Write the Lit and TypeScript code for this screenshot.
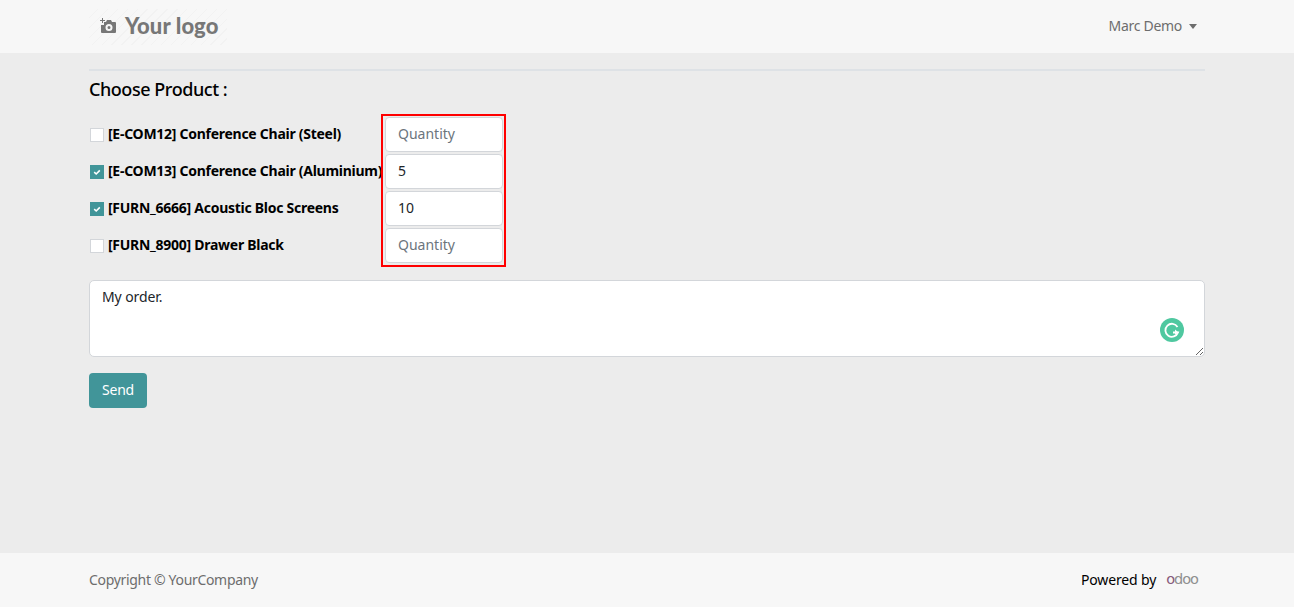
import { LitElement, html, css } from "lit";
import { customElement } from "lit/decorators.js";

const products = [
  { label: "[E-COM12] Conference Chair (Steel)", checked: false, qty: "" },
  { label: "[E-COM13] Conference Chair (Aluminium)", checked: true, qty: "5" },
  { label: "[FURN_6666] Acoustic Bloc Screens", checked: true, qty: "10" },
  { label: "[FURN_8900] Drawer Black", checked: false, qty: "" },
];

@customElement("app-root")
export class AppRoot extends LitElement {
  static styles = css`
    :host { display: block; font-family: "Noto Sans", sans-serif; font-size: 14px; color: #000; }
    * { box-sizing: border-box; }
    .page { min-height: 607px; display: flex; flex-direction: column; background: #ececec; }
    .bar { background: #f7f7f7; padding: 0 89px; display: flex; align-items: center; justify-content: space-between; flex: none; }
    .top { height: 53px; }
    .logo { width: 138px; height: 36px; display: flex; align-items: center; gap: 8px; padding: 0 0 2px 10px;
      background: repeating-linear-gradient(135deg, #f7f7f7 0 6px, #f2f2f2 6px 7px);
      color: #777; font-family: "Lato", sans-serif; font-weight: 900; font-size: 22px; letter-spacing: 0.1px; }
    .logo svg { flex: none; }
    .user { display: flex; align-items: center; gap: 7px; color: #6d6d6d; margin-right: 8px; letter-spacing: -0.3px; padding-bottom: 2px; }
    .caret { width: 0; height: 0; margin-top: 1px; border-left: 4px solid transparent; border-right: 4px solid transparent; border-top: 5px solid #6d6d6d; }
    main { flex: 1; padding: 16px 89px 0; }
    hr { margin: 0; border: 0; border-top: 2px solid #dee2e6; }
    h2 { margin: 6px 0 0; font-size: 18px; line-height: 24px; font-weight: 500; letter-spacing: -0.45px; }
    .form { display: flex; margin-top: 13px; }
    .labels { width: 292px; padding-top: 3px; display: flex; flex-direction: column; gap: 2px; }
    .row { height: 35px; display: flex; align-items: center; gap: 4px; font-weight: 700; white-space: nowrap; padding-left: 1px; letter-spacing: -0.27px; }
    .row span:last-child { padding-bottom: 2px; }
    .box { width: 14px; height: 14px; flex: none; background: #fff; border: 1px solid #d3d6da; display: flex; align-items: center; justify-content: center; }
    .box.on { background: #419599; border-color: #419599; }
    .qty { border: 2px solid #f00; padding: 1px 1px 1px 2px; width: 125px; height: 153px; display: flex; flex-direction: column; gap: 2px; }
    input { width: 118px; height: 35px; border: 1px solid #d3d6da; border-radius: 4px; padding: 0 12px 2px; font: inherit; color: #212529; background: #fff; outline: none; display: block; }
    input::placeholder { color: #6c757d; opacity: 1; }
    .note { position: relative; margin-top: 13px; height: 77px; }
    textarea { display: block; width: 100%; height: 77px; border: 1px solid #d3d6da; border-radius: 5px; padding: 6px 12px; font: inherit; letter-spacing: -0.1px; color: #212529; background: #fff; outline: none; }
    .g { position: absolute; right: 21px; top: 38px; width: 24px; height: 24px; }
    button { display: block; margin-top: 16px; width: 58px; height: 35px; border: 0; border-radius: 4px; padding: 0 0 2px; background: #419599; color: #fff; font: inherit; letter-spacing: -0.2px; }
    .foot { height: 54px; }
    .copy { color: #6d6d6d; letter-spacing: -0.32px; padding-bottom: 2px; }
    .pow { display: flex; align-items: center; gap: 10px; margin-right: 7px; letter-spacing: -0.15px; padding-bottom: 2px; }
    .odoo { font-family: "DejaVu Sans", sans-serif; font-size: 14.5px; color: #8f8f8f; letter-spacing: -1px; line-height: 1; padding-top: 1px; }
    .odoo b { font-weight: 400; color: #875a7b; }
  `;

  render() {
    return html`
      <div class="page">
        <header class="bar top">
          <div class="logo">
            <svg width="18" height="16" viewBox="0 0 18 16" fill="#777">
              <path d="M3 0h1v2h2v1H4v2H3V3H1V2h2z"/>
              <path fill-rule="evenodd" d="M8 2h4l1 2h3a1 1 0 0 1 1 1v9a1 1 0 0 1-1 1H3a1 1 0 0 1-1-1V7h3V4h2zM10 6a3.5 3.5 0 1 0 0 7 3.5 3.5 0 0 0 0-7zm0 2a1.5 1.5 0 1 1 0 3 1.5 1.5 0 0 1 0-3z"/>
            </svg>
            <span>Your logo</span>
          </div>
          <div class="user"><span>Marc Demo</span><i class="caret"></i></div>
        </header>
        <main>
          <hr />
          <h2>Choose Product :</h2>
          <div class="form">
            <div class="labels">
              ${products.map(
                (p) => html`<div class="row">
                  <span class="box ${p.checked ? "on" : ""}">
                    ${p.checked
                      ? html`<svg width="10" height="10" viewBox="0 0 10 10"><path d="M2.2 5.2 4.2 7 7.8 3.4" fill="none" stroke="#fff" stroke-width="1.6"/></svg>`
                      : ""}
                  </span>
                  <span>${p.label}</span>
                </div>`
              )}
            </div>
            <div class="qty">
              ${products.map((p) => html`<input placeholder="Quantity" .value=${p.qty} />`)}
            </div>
          </div>
          <div class="note">
            <textarea .value=${"My order."}></textarea>
            <svg class="g" viewBox="0 0 24 24">
              <circle cx="12" cy="12" r="12" fill="#4fc8a0"/>
              <path d="M17.5 9A6.5 6.5 0 1 0 18 14.5H13" fill="none" stroke="#fff" stroke-width="1.8"/>
              <path d="M18.5 14.5 15 11.5v5z" fill="#fff"/>
            </svg>
          </div>
          <button>Send</button>
        </main>
        <footer class="bar foot">
          <span class="copy">Copyright © YourCompany</span>
          <span class="pow"><span>Powered by</span><span class="odoo"><b>o</b>doo</span></span>
        </footer>
      </div>
    `;
  }
}
